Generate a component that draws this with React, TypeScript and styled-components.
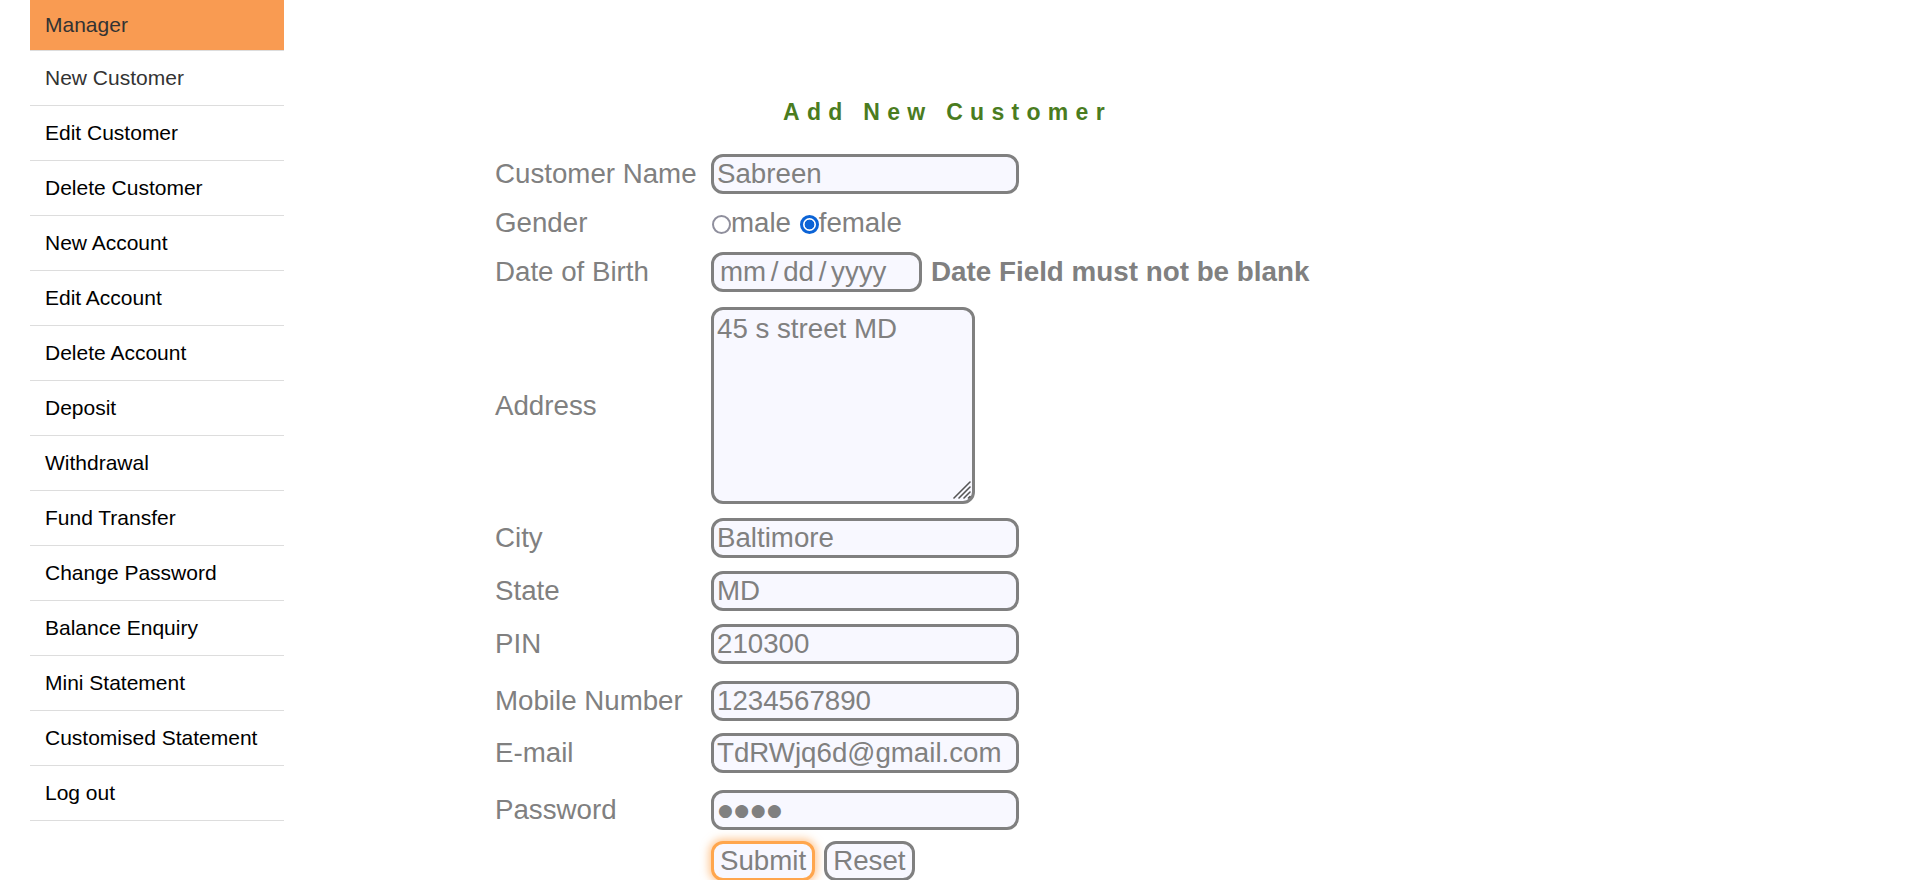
import React from "react";
import styled, { createGlobalStyle } from "styled-components";

const GlobalStyle = createGlobalStyle`
  html, body {
    margin: 0;
    padding: 0;
    background: #fff;
    font-family: "Liberation Sans", Arial, sans-serif;
  }
`;

const menu = [
  "New Customer",
  "Edit Customer",
  "Delete Customer",
  "New Account",
  "Edit Account",
  "Delete Account",
  "Deposit",
  "Withdrawal",
  "Fund Transfer",
  "Change Password",
  "Balance Enquiry",
  "Mini Statement",
  "Customised Statement",
  "Log out",
];

export default function App() {
  return (
    <Page>
      <GlobalStyle />
      <Sidebar>
        <MenuHead>Manager</MenuHead>
        {menu.map((m, i) => (
          <MenuItem key={m} muted={i === 0}>
            {m}
          </MenuItem>
        ))}
      </Sidebar>
      <Main>
        <Title>Add New Customer</Title>
        <Row top={28}>
          <Label>Customer Name</Label>
          <TextInput defaultValue="Sabreen" />
        </Row>
        <Row top={9}>
          <Label>Gender</Label>
          <Radios>
            <RadioMark />
            {"male "}
            <RadioMark checked />
            female
          </Radios>
        </Row>
        <Row top={9}>
          <Label>Date of Birth</Label>
          <DateInput readOnly value="mm / dd / yyyy" />
          <Error>Date Field must not be blank</Error>
        </Row>
        <Row top={15}>
          <Label>Address</Label>
          <AreaWrap>
            <Area defaultValue="45 s street MD" />
            <Grip width="20" height="20" viewBox="0 0 20 20">
              <line x1="19" y1="3" x2="3" y2="19" />
              <line x1="19" y1="8" x2="8" y2="19" />
              <line x1="19" y1="13" x2="13" y2="19" />
              <line x1="19" y1="17.5" x2="17.5" y2="19" />
            </Grip>
          </AreaWrap>
        </Row>
        <Row top={14}>
          <Label>City</Label>
          <TextInput defaultValue="Baltimore" />
        </Row>
        <Row top={13}>
          <Label>State</Label>
          <TextInput defaultValue="MD" />
        </Row>
        <Row top={13}>
          <Label>PIN</Label>
          <TextInput defaultValue="210300" />
        </Row>
        <Row top={17}>
          <Label>Mobile Number</Label>
          <TextInput defaultValue="1234567890" />
        </Row>
        <Row top={12}>
          <Label>E-mail</Label>
          <TextInput defaultValue="TdRWjq6d@gmail.com" />
        </Row>
        <Row top={17}>
          <Label>Password</Label>
          <PasswordInput readOnly value="●●●●" />
        </Row>
        <Row top={11}>
          <Label />
          <Buttons>
            <Button focused>Submit</Button>
            <Button>Reset</Button>
          </Buttons>
        </Row>
      </Main>
    </Page>
  );
}

const Page = styled.div`
  display: flex;
  align-items: flex-start;
  height: 880px;
  overflow: hidden;
`;

const Sidebar = styled.ul`
  list-style: none;
  margin: 0 0 0 30px;
  padding: 0;
  width: 254px;
  flex-shrink: 0;
`;

const MenuHead = styled.li`
  height: 51px;
  box-sizing: border-box;
  background: #f99b52;
  color: #333;
  font-size: 21px;
  padding-left: 15px;
  display: flex;
  align-items: center;
  border-bottom: 1px solid #ddd;
`;

const MenuItem = styled.li<{ muted?: boolean }>`
  height: 55px;
  box-sizing: border-box;
  border-bottom: 1px solid #ddd;
  padding-left: 15px;
  display: flex;
  align-items: center;
  font-size: 21px;
  color: ${(p) => (p.muted ? "#333" : "#000")};
`;

const Main = styled.div`
  margin-left: 211px;
  padding-top: 98px;
  display: flex;
  flex-direction: column;
  color: #808080;
  font-size: 27.7px;
`;

const Title = styled.div`
  margin-left: 288px;
  height: 28px;
  line-height: 28px;
  font-size: 23px;
  font-weight: bold;
  letter-spacing: 7.3px;
  color: #4a7c1f;
`;

const Row = styled.div<{ top: number }>`
  display: flex;
  align-items: center;
  margin-top: ${(p) => p.top}px;
  min-height: 40px;
`;

const Label = styled.div`
  width: 216px;
  flex-shrink: 0;
  white-space: nowrap;
`;

const fieldCss = `
  box-sizing: border-box;
  height: 40px;
  border: 3px solid #808080;
  border-radius: 12px;
  background: #f8f8ff;
  color: #808080;
  font-family: "Liberation Sans", Arial, sans-serif;
  font-size: 27.7px;
  padding: 0 3px;
  outline: none;
`;

const TextInput = styled.input`
  ${fieldCss}
  width: 308px;
`;

const DateInput = styled.input`
  ${fieldCss}
  width: 211px;
  padding-left: 6px;
  word-spacing: -3px;
`;

const PasswordInput = styled.input`
  ${fieldCss}
  width: 308px;
  font-family: "DejaVu Sans", sans-serif;
  font-size: 17px;
  letter-spacing: 1.5px;
  padding-left: 4px;
`;

const AreaWrap = styled.div`
  position: relative;
  width: 264px;
  height: 197px;
`;

const Area = styled.textarea`
  ${fieldCss}
  display: block;
  width: 264px;
  height: 197px;
  padding: 3px;
  line-height: 1.15;
  resize: none;
`;

const Grip = styled.svg`
  position: absolute;
  right: 4px;
  bottom: 5px;
  stroke: #555;
  stroke-width: 1.6;
  stroke-linecap: round;
`;

const Error = styled.span`
  margin-left: 9px;
  font-weight: bold;
  font-size: 27.8px;
  color: #808080;
  white-space: nowrap;
`;

const Radios = styled.div`
  display: flex;
  align-items: center;
  height: 40px;
  white-space: pre;
`;

const RadioMark = styled.span<{ checked?: boolean }>`
  display: inline-block;
  flex-shrink: 0;
  box-sizing: border-box;
  width: 19px;
  height: 19px;
  margin: 3px 0 0 1px;
  border-radius: 50%;
  border: ${(p) => (p.checked ? "3px solid #0b63d6" : "2.5px solid #8f8f9d")};
  background: ${(p) =>
    p.checked ? "radial-gradient(circle, #0b63d6 0 4.6px, #fff 5.2px)" : "#fff"};
`;

const Buttons = styled.div`
  display: flex;
  gap: 9px;
`;

const Button = styled.button<{ focused?: boolean }>`
  box-sizing: border-box;
  height: 40px;
  padding: 0 6px;
  border: 3px solid ${(p) => (p.focused ? "#ffa64d" : "#808080")};
  border-radius: 12px;
  background: #f8f8ff;
  color: #808080;
  font-family: "Liberation Sans", Arial, sans-serif;
  font-size: 27.7px;
  box-shadow: ${(p) => (p.focused ? "0 0 9px 2px rgba(255, 160, 70, 0.6)" : "none")};
`;
